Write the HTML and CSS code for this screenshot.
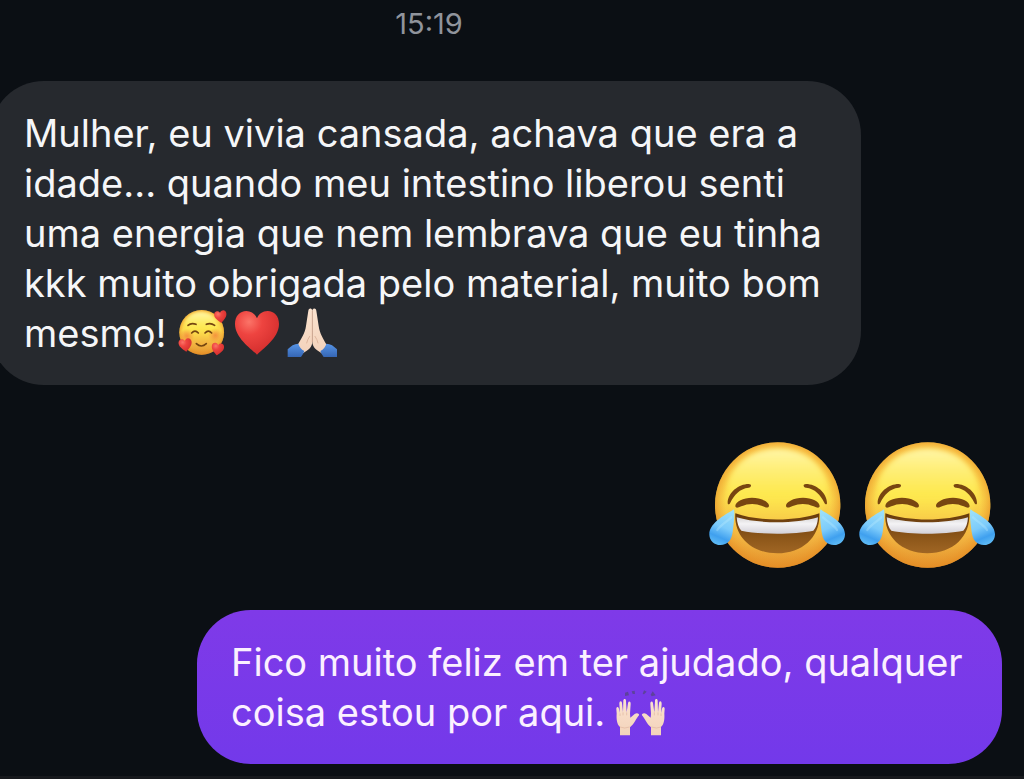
FILE: index.html
```html
<!DOCTYPE html>
<html lang="pt-BR">
<head>
  <meta charset="utf-8">
  <meta name="viewport" content="width=device-width, initial-scale=1">
  <title>Conversa</title>
  <link rel="stylesheet" href="styles.css">
</head>
<body>
  <svg class="defs" aria-hidden="true">
    <defs>
      <filter id="soft-large" x="-20%" y="-20%" width="140%" height="140%">
        <feGaussianBlur stdDeviation="8"/>
      </filter>
      <filter id="soft-small" x="-20%" y="-20%" width="140%" height="140%">
        <feGaussianBlur stdDeviation="4"/>
      </filter>
      <linearGradient id="face" x1="0" y1="0" x2="0" y2="1">
        <stop offset="0" stop-color="#fbc949"/>
        <stop offset=".45" stop-color="#fbd94c"/>
        <stop offset=".75" stop-color="#f3b541"/>
        <stop offset="1" stop-color="#e3942f"/>
      </linearGradient>
      <radialGradient id="rim" cx=".5" cy=".48" r=".52">
        <stop offset=".8" stop-color="#ee9a2c" stop-opacity="0"/>
        <stop offset="1" stop-color="#e58b22" stop-opacity=".75"/>
      </radialGradient>
      <linearGradient id="shine" x1="0" y1="0" x2="0" y2="1">
        <stop offset="0" stop-color="#fff6a8"/>
        <stop offset=".55" stop-color="#fff04f" stop-opacity=".7"/>
        <stop offset="1" stop-color="#fbd94c" stop-opacity="0"/>
      </linearGradient>
      <linearGradient id="teeth" x1="0" y1="0" x2="0" y2="1">
        <stop offset="0" stop-color="#d9d7d8"/>
        <stop offset=".4" stop-color="#f4f3f5"/>
        <stop offset="1" stop-color="#d3d1d8"/>
      </linearGradient>
      <linearGradient id="mouth" x1="0" y1="0" x2="0" y2="1">
        <stop offset="0" stop-color="#65390c"/>
        <stop offset=".6" stop-color="#8c5619"/>
        <stop offset="1" stop-color="#a06624"/>
      </linearGradient>
      <linearGradient id="tear" x1=".7" y1="0" x2=".4" y2="1">
        <stop offset="0" stop-color="#9ce0fa"/>
        <stop offset=".5" stop-color="#7ccbfb"/>
        <stop offset=".8" stop-color="#3fa0ef"/>
        <stop offset="1" stop-color="#5cb9f5"/>
      </linearGradient>
      <radialGradient id="heart" cx=".32" cy=".25" r=".85">
        <stop offset="0" stop-color="#fb7468"/>
        <stop offset=".35" stop-color="#ee4440"/>
        <stop offset="1" stop-color="#cf2a2a"/>
      </radialGradient>
      <radialGradient id="blush">
        <stop offset="0" stop-color="#f4863b" stop-opacity=".8"/>
        <stop offset="1" stop-color="#f4863b" stop-opacity="0"/>
      </radialGradient>
      <linearGradient id="skin" x1="0" y1="0" x2="0" y2="1">
        <stop offset="0" stop-color="#fbe3cf"/>
        <stop offset="1" stop-color="#f3d2bb"/>
      </linearGradient>
      <linearGradient id="sleeve" x1="0" y1="0" x2="0" y2="1">
        <stop offset="0" stop-color="#5794e6"/>
        <stop offset="1" stop-color="#3566b4"/>
      </linearGradient>
      <path id="heart-shape" d="M66 131C52 116 0 82 0 39C0 15 15 0 34 0C49 0 61 9 66 22C71 9 83 0 98 0C117 0 132 15 132 39C132 82 80 116 66 131Z"/>

      <g id="tear-shape">
        <path d="M102 238C86 250 27 276 28 314C29 333 43 345 61 345C83 345 95 330 98 306C101 283 105 255 102 238Z" fill="url(#tear)"/>
        <path d="M94 262C80 276 60 286 52 300" fill="none" stroke="#c4f0ff" stroke-width="7" stroke-linecap="round" opacity=".3"/>
      </g>
      <path id="brow-shape" d="M83 219C83 188 116 162 146 162C156 162 155 172 146 173C119 176 103 194 91 218C88 224 83 224 83 219Z"/>
      <path id="eye-shape" d="M106 229C105 215 130 203 156 203C184 203 208 216 207 228C205 236 195 232 187 228C166 219 143 220 124 229C114 234 107 235 106 229Z"/>

      <symbol id="joy" viewBox="27 33 408 384">
        <circle cx="233" cy="225" r="188" fill="url(#face)"/>
        <circle cx="233" cy="225" r="188" fill="url(#rim)"/>
        <ellipse cx="233" cy="182" rx="150" ry="126" fill="url(#shine)" filter="url(#soft-large)"/>
        <g fill="#784611">
          <use href="#brow-shape"/>
          <use href="#brow-shape" transform="matrix(-1 0 0 1 464 0)"/>
          <use href="#eye-shape"/>
          <use href="#eye-shape" transform="matrix(-1 0 0 1 465 0)"/>
        </g>
        <path d="M106 250C176 275 287 275 358 250C362 319 309 370 232 370C155 370 101 319 106 250Z" fill="url(#mouth)"/>
        <path d="M110 262C178 282 285 282 354 262C353 279 348 295 340 302C280 314 183 314 124 302C116 294 111 279 110 262Z" fill="url(#teeth)"/>
        <use href="#tear-shape"/>
        <use href="#tear-shape" transform="matrix(-1 0 0 1 463 0)"/>
      </symbol>

      <symbol id="hearts-face" viewBox="24 27 150 150">
        <circle cx="98" cy="100" r="67" fill="url(#face)"/>
        <circle cx="98" cy="100" r="67" fill="url(#rim)"/>
        <ellipse cx="96" cy="82" rx="50" ry="42" fill="url(#shine)" filter="url(#soft-small)"/>
        <circle cx="54" cy="111" r="22" fill="url(#blush)"/>
        <circle cx="139" cy="109" r="22" fill="url(#blush)"/>
        <g fill="none" stroke="#744510" stroke-width="5" stroke-linecap="round">
          <path d="M57 79Q67 70 81 76"/>
          <path d="M112 76Q125 70 137 79"/>
          <path d="M68 102Q78 91 88 102"/>
          <path d="M108 102Q118 91 128 102"/>
          <path d="M82 134Q97 148 112 134"/>
        </g>
        <g fill="url(#heart)">
          <use href="#heart-shape" transform="translate(134 38) rotate(-8) scale(.28)"/>
          <use href="#heart-shape" transform="translate(27 122) rotate(-8) scale(.3)"/>
          <use href="#heart-shape" transform="translate(130 130) rotate(8) scale(.28)"/>
        </g>
      </symbol>

      <symbol id="red-heart" viewBox="-9 -9 150 150">
        <use href="#heart-shape" fill="url(#heart)"/>
      </symbol>

      <symbol id="pray" viewBox="356 27 150 150">
        <path d="M432 33C429 26 421 27 420 35L413 81C410 103 398 121 388 137L402 164C420 153 432 146 432 127Z" fill="url(#skin)"/>
        <path d="M432 33C435 26 443 27 444 35L451 81C454 103 465 121 475 137L462 164C444 153 432 146 432 127Z" fill="url(#skin)"/>
        <path d="M432 36V128M424 112Q417 122 415 132M440 112Q447 122 449 132" fill="none" stroke="#d3a48b" stroke-width="2" stroke-linecap="round"/>
        <path d="M358 151C367 141 378 134 390 134Q394 148 408 156Q404 167 398 174H358Z" fill="url(#sleeve)"/>
        <path d="M506 151C497 141 486 134 474 134Q470 148 456 156Q460 167 466 174H506Z" fill="url(#sleeve)"/>
      </symbol>

      <g id="raised-hand">
        <path d="M86 170V145C76 136 75 119 76 105L75 91C75 84 81 83 83 90L86 103L84 75C84 66 91 65 92 73L95 101L96 67C96 59 104 59 104 67L106 101L110 74C111 66 118 67 118 75L116 105L117 117L130 106C137 101 145 105 143 110C139 114 135 121 131 128C127 136 121 141 116 146V170Z" fill="url(#skin)"/>
        <path d="M86 104V112M95 101V110M106 101V110M86 145Q99 151 115 145" fill="none" stroke="#dfb59e" stroke-width="2"/>
      </g>
      <symbol id="raised-hands" viewBox="74 25 150 150">
        <use href="#raised-hand"/>
        <use href="#raised-hand" transform="matrix(-1 0 0 1 295 0)"/>
        <path d="M101 42L110 39L113 50L101 52ZM121 38L130 36L131 46H124ZM154 46L158 35L166 39L158 47ZM178 48L184 38L193 50L181 53Z" fill="#5d429c"/>
      </symbol>
    </defs>
  </svg>

  <main class="chat">
    <time class="timestamp" datetime="15:19">15:19</time>

    <p class="bubble bubble-received">Mulher, eu vivia cansada, achava que era a idade... quando meu intestino liberou senti uma energia que nem lembrava que eu tinha kkk muito obrigada pelo material, muito bom mesmo! <span class="emoji-group"><svg class="emoji" role="img" aria-label="Rosto sorridente com corações"><use href="#hearts-face"/></svg><svg class="emoji" role="img" aria-label="Coração vermelho"><use href="#red-heart"/></svg><svg class="emoji" role="img" aria-label="Mãos em oração"><use href="#pray"/></svg></span></p>

    <div class="reaction">
      <svg class="emoji-large" role="img" aria-label="Rosto chorando de rir"><use href="#joy"/></svg>
      <svg class="emoji-large" role="img" aria-label="Rosto chorando de rir"><use href="#joy"/></svg>
    </div>

    <p class="bubble bubble-sent">Fico muito feliz em ter ajudado, qualquer coisa estou por aqui. <svg class="emoji" role="img" aria-label="Mãos para o alto"><use href="#raised-hands"/></svg></p>
  </main>
  <footer class="composer-edge"></footer>
</body>
</html>
```
FILE: styles.css
```css
* {
  box-sizing: border-box;
}

body {
  margin: 0;
  min-height: 100vh;
  display: flex;
  flex-direction: column;
  overflow-x: hidden;
  background: #0b0f14;
  color: #f5f6f8;
  font-family: Inter, "Noto Sans", sans-serif;
}

.defs {
  position: absolute;
  width: 0;
  height: 0;
}

.chat {
  display: flex;
  flex-direction: column;
  padding: 8px 22px 12px 0;
}

.timestamp {
  padding-right: 144px;
  text-align: center;
  font-size: 29px;
  line-height: 32px;
  color: #90949c;
}

.bubble {
  margin: 0;
  padding: 27px 34px;
  font-size: 38px;
  line-height: 50px;
}

.bubble-received {
  align-self: flex-start;
  max-width: 871px;
  margin: 41px 0 0 -10px;
  border-radius: 54px;
  background: #26292e;
}

.bubble-sent {
  align-self: flex-end;
  max-width: 805px;
  margin-top: 41px;
  border-radius: 54px;
  background: linear-gradient(#7f3ae8, #7339ea);
  color: #fbf0ff;
}

.emoji-group {
  display: inline-flex;
  gap: 5px;
  vertical-align: top;
}

.emoji {
  width: 50px;
  height: 50px;
  vertical-align: top;
}

.reaction {
  display: flex;
  justify-content: flex-end;
  gap: 14px;
  margin-top: 56px;
  padding-right: 7px;
}

.emoji-large {
  width: 136px;
  height: 128px;
}

.composer-edge {
  flex: 1;
  background: #17191d;
}
```
